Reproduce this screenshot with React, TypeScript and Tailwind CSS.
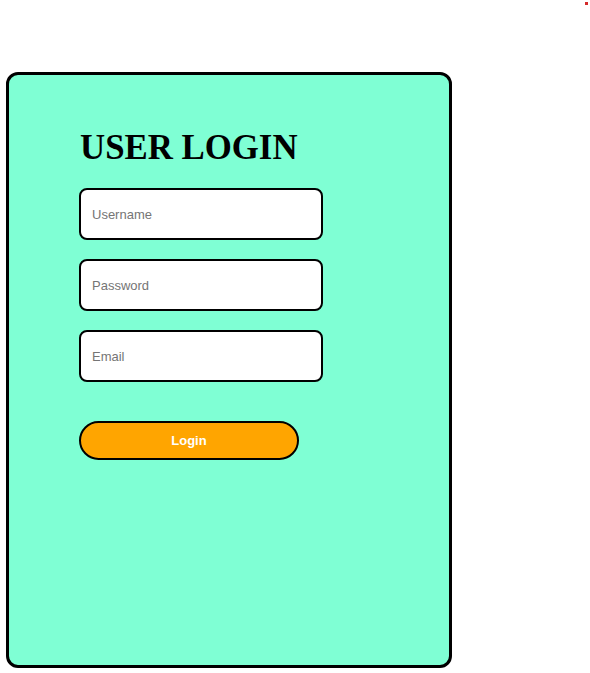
import React from "react";

export default function App() {
  return (
    <div className="relative w-[590px] h-[673px] bg-white" style={{ fontFamily: "'Liberation Sans', Arial, sans-serif" }}>
      <div className="absolute left-[585px] top-[2px] w-[3px] h-[3px] bg-[#d42a2a]" />
      <div className="pt-[72px] pl-[6px]">
        <div className="w-[446px] h-[596px] bg-[#7fffd4] border-[3px] border-black rounded-[12px] pl-[70px] pt-[53px]">
          <h1 className="text-[34.8px] leading-[40px] font-bold text-black ml-[1px]" style={{ fontFamily: "'Liberation Serif', 'Times New Roman', serif" }}>
            USER LOGIN
          </h1>
          <div className="flex flex-col gap-[19px] mt-[20px]">
            {["Username", "Password", "Email"].map((p) => (
              <input
                key={p}
                placeholder={p}
                type={p === "Password" ? "password" : "text"}
                className="w-[244px] h-[52px] bg-white border-2 border-black rounded-[8px] px-[11px] text-[13px] text-black placeholder:text-[#757575] outline-none"
              />
            ))}
          </div>
          <button className="mt-[39px] w-[220px] h-[39px] rounded-full bg-[#ffa500] border-2 border-black text-white text-[13px] font-bold">
            Login
          </button>
        </div>
      </div>
    </div>
  );
}
